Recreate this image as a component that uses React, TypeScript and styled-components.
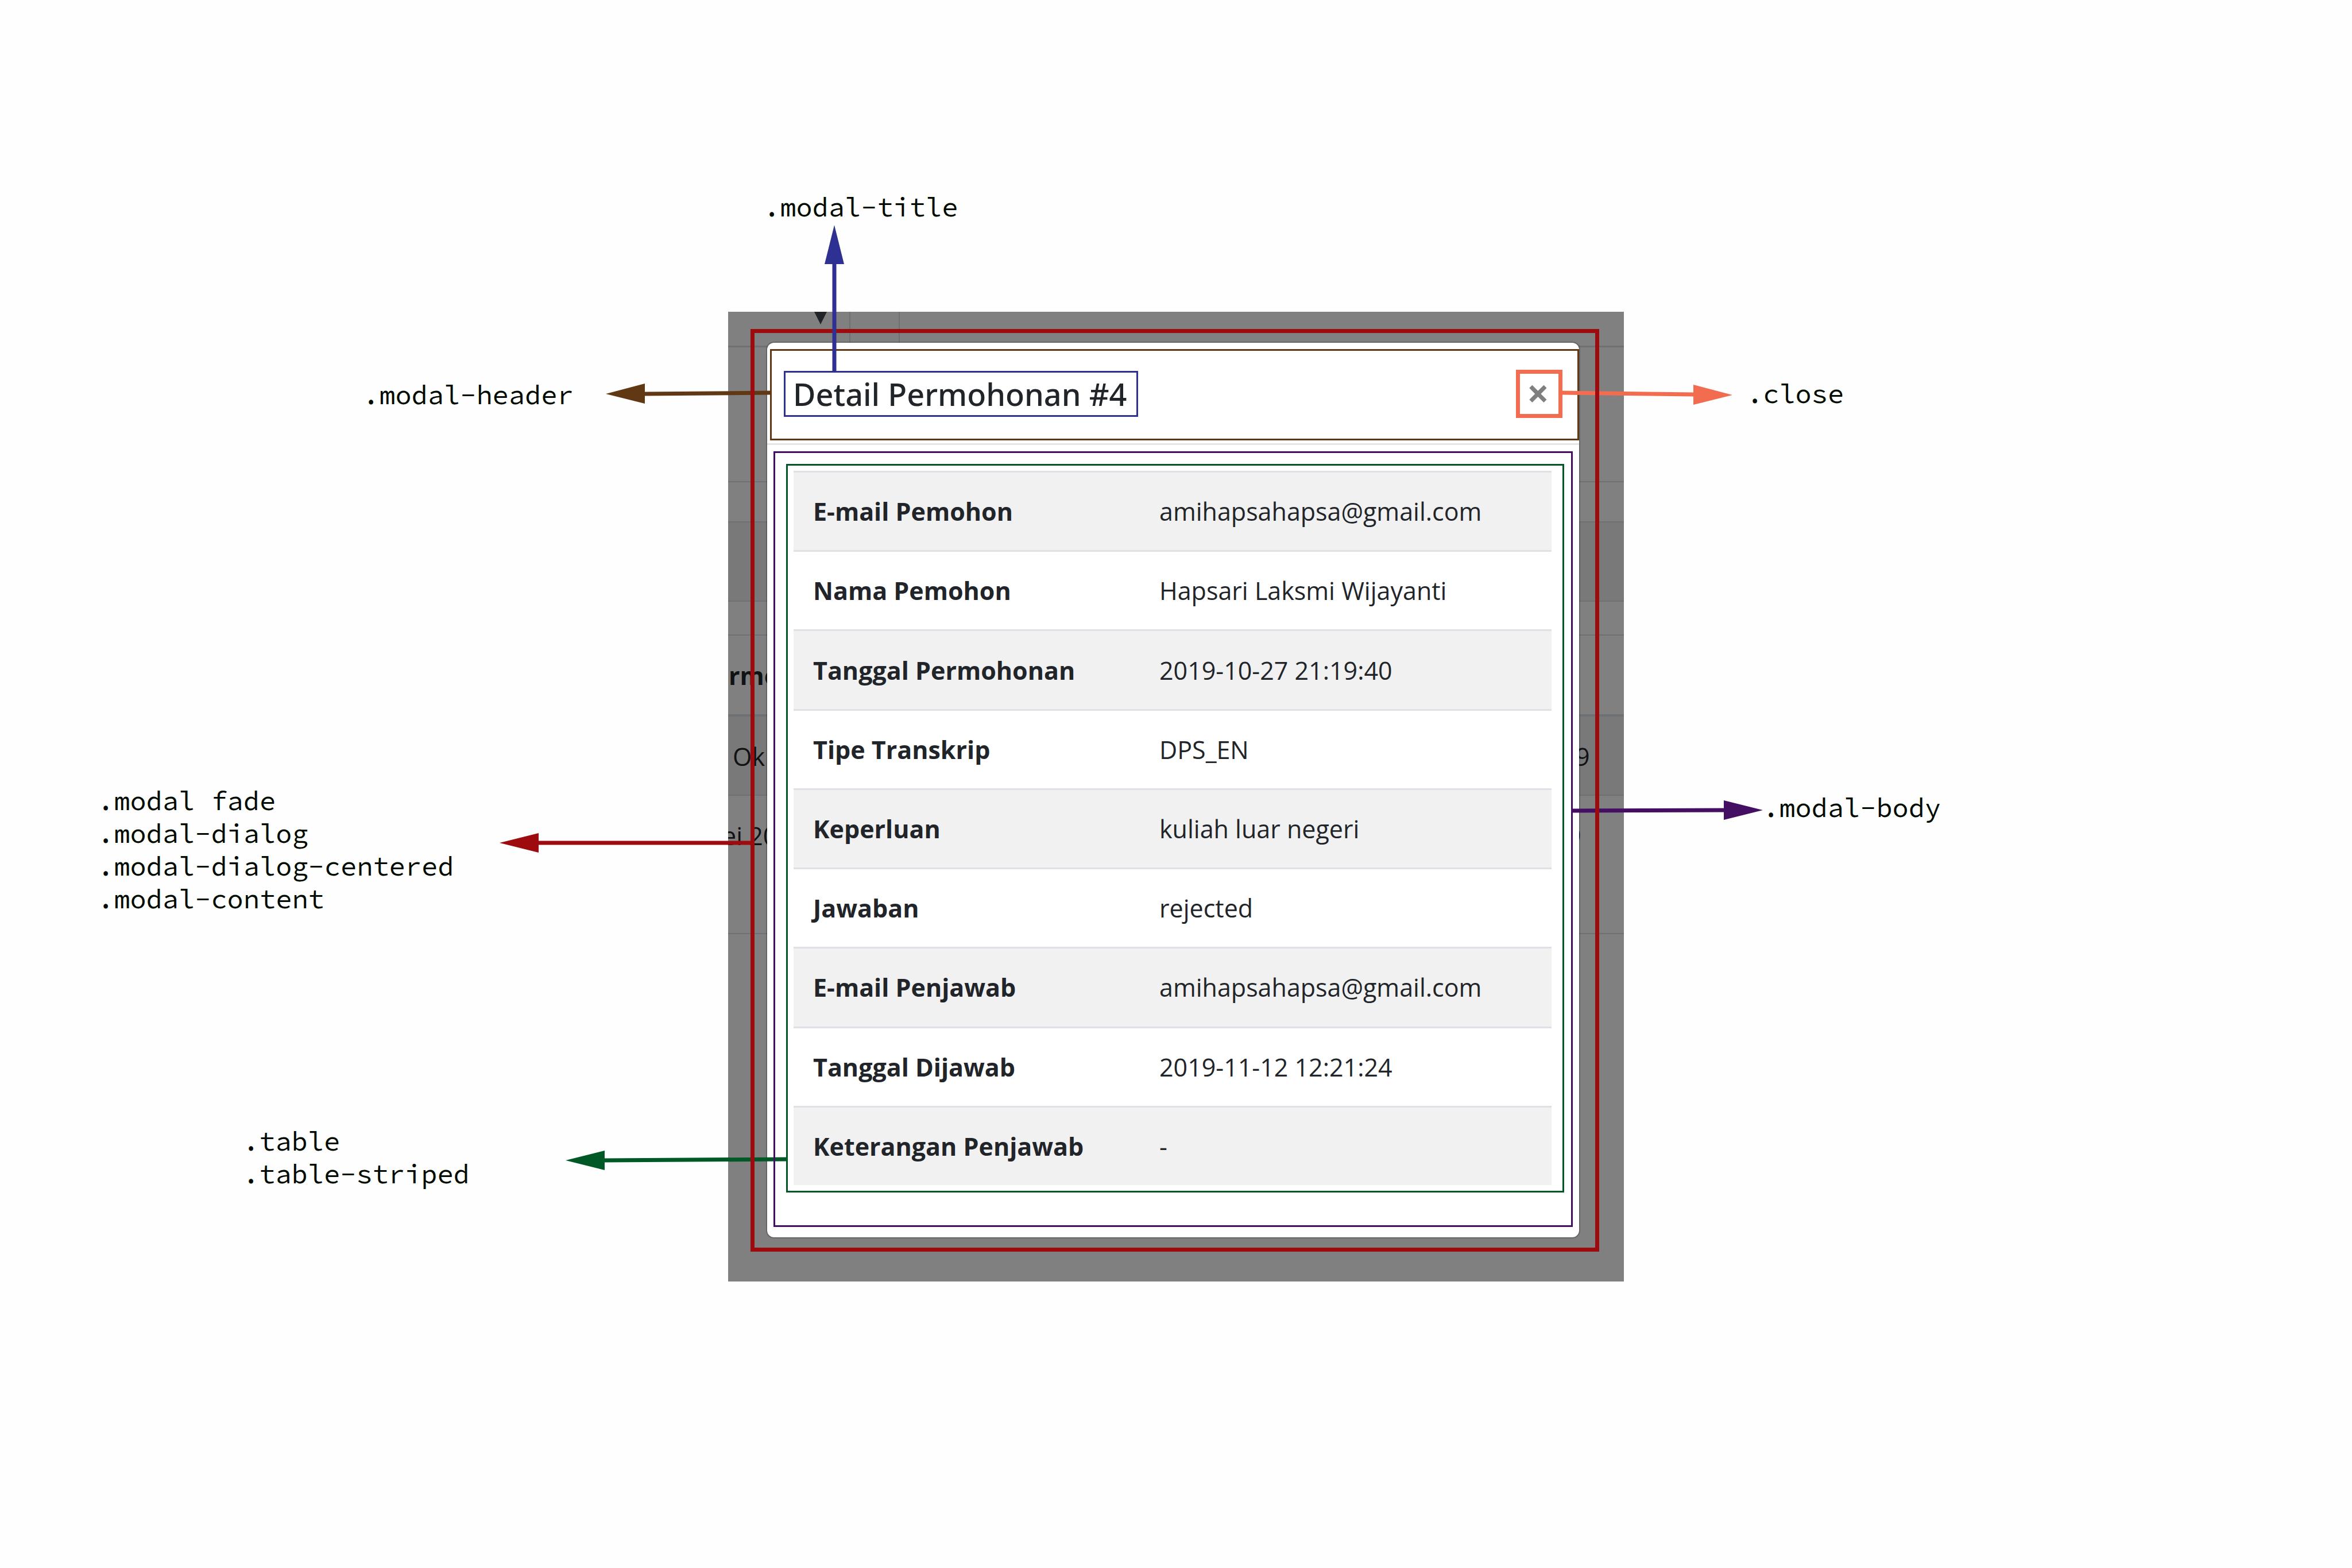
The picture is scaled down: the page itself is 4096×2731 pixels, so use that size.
import React from 'react';
import styled, { createGlobalStyle, css } from 'styled-components';

const colors = {
  dialog: '#9e0b0f',
  header: '#603813',
  title: '#2e3192',
  close: '#f26c4f',
  body: '#440e62',
  table: '#005826',
  ink: '#212529',
  line: '#dee2e6',
};

const GlobalStyle = createGlobalStyle`
  *, *::before, *::after { box-sizing: border-box; }
  body {
    margin: 0;
    background: #fefefe;
    color: ${colors.ink};
    font-family: 'Open Sans', 'Noto Sans', sans-serif;
    overflow-x: hidden;
  }
`;

/* Coloured outline drawn above the content and the leader lines. */
const outlined = (color: string, width: number, level: number) => css`
  position: relative;
  &::after {
    content: '';
    position: absolute;
    inset: 0;
    border: ${width}px solid ${color};
    z-index: ${level};
    pointer-events: none;
  }
`;

const Page = styled.main`
  display: flex;
  justify-content: center;
  padding: 543px 0 499px;
`;

const Shot = styled.figure`
  position: relative;
  display: grid;
  width: 1560px;
  margin: 0;
`;

const Backdrop = styled.div`
  grid-area: 1 / 1;
  display: flex;
  flex-direction: column;
  background: #808080;
  color: #101214;
  font-size: 43px;
  line-height: 67px;
  overflow: hidden;
`;

const BackRow = styled.div<{ $h: number; $band?: boolean; $rule?: number }>`
  display: flex;
  justify-content: space-between;
  align-items: flex-start;
  flex: none;
  height: ${(p) => p.$h}px;
  background: ${(p) => (p.$band ? '#797979' : 'transparent')};
  border-bottom: ${(p) => p.$rule ?? 2}px solid #6e7174;
`;

const BackTextRow = styled(BackRow)`
  padding-top: 36px;
`;

const BackFilters = styled(BackRow)`
  justify-content: flex-start;
  align-items: stretch;
`;

const FilterCell = styled.div<{ $w: number }>`
  width: ${(p) => p.$w}px;
  border-right: 2px solid #6e7174;
`;

const SortMark = styled.svg`
  display: block;
  width: 22px;
  height: 22px;
  margin-left: 150px;
`;

const BackText = styled.span<{ $bold?: boolean; $indent?: number; $w: number }>`
  width: ${(p) => p.$w}px;
  white-space: pre;
  text-indent: ${(p) => p.$indent ?? 0}px;
  font-weight: ${(p) => (p.$bold ? 700 : 400)};
`;

const Dialog = styled.div`
  grid-area: 1 / 1;
  margin: 30px 43px 52px 39px;
  padding: 22px 33px 23px 27px;
  ${outlined(colors.dialog, 7, 2)}
`;

const Content = styled.section`
  background: #fff;
  background-clip: padding-box;
  border: 2px solid rgba(0, 0, 0, 0.2);
  border-radius: 14px;
`;

const Header = styled.header`
  display: flex;
  align-items: center;
  justify-content: space-between;
  margin: 11px 0 5px 5px;
  padding: 36px 29px 39px 24px;
  ${outlined(colors.header, 3, 1)}
`;

const Title = styled.h5`
  margin: 0;
  padding: 0 20px 0 16px;
  font-family: 'Noto Sans', 'Open Sans', sans-serif;
  font-size: 54px;
  line-height: 80px;
  font-weight: 500;
  ${outlined(colors.title, 3, 1)}
`;

const Close = styled.button`
  display: flex;
  align-items: center;
  justify-content: center;
  width: 81px;
  height: 84px;
  padding: 0 4px 4px 0;
  border: 7px solid ${colors.close};
  background: transparent;
  color: #7f7f7f;
  font: 700 68px/68px 'Open Sans', sans-serif;
`;

const Divider = styled.hr`
  height: 3px;
  margin: 0;
  border: 0;
  background: #e3e7ea;
`;

const Body = styled.div`
  margin: 11px 11px 18px;
  padding: 22px 15px 60px 22px;
  ${outlined(colors.body, 3, 2)}
`;

const TableFrame = styled.div`
  padding: 12px 22px 13px 13px;
  ${outlined(colors.table, 3, 1)}
`;

const Table = styled.table`
  width: 100%;
  height: 1244px;
  border-spacing: 0;
  font-size: 43px;
  line-height: 67px;
  text-align: left;
`;

const Row = styled.tr`
  &:nth-child(odd) { background: #f1f1f1; }
`;

const cell = css`
  padding: 34px;
  border-top: 3px solid ${colors.line};
  white-space: nowrap;
`;

const Term = styled.th`
  ${cell}
  width: 603px;
  font-weight: 700;
`;

const Value = styled.td`
  ${cell}
`;

const Leaders = styled.svg<{ $level: number }>`
  position: absolute;
  inset: 0;
  width: 100%;
  height: 100%;
  overflow: visible;
  pointer-events: none;
  z-index: ${(p) => p.$level};
`;

const Note = styled.figcaption<{ $x: number; $y: number }>`
  position: absolute;
  left: ${(p) => p.$x}px;
  top: ${(p) => p.$y}px;
  color: #000a00;
  font-family: 'Source Code Pro', 'DejaVu Sans Mono', monospace;
  font-size: 47px;
  line-height: 57px;
  white-space: pre;
`;

type ArrowProps = { color: string; from: [number, number]; neck: [number, number]; head: string };

const Arrow = ({ color, from, neck, head }: ArrowProps) => (
  <g fill={color} stroke="none">
    <line x1={from[0]} y1={from[1]} x2={neck[0]} y2={neck[1]} stroke={color} strokeWidth={7} />
    <polygon points={head} />
  </g>
);

const details: [string, string][] = [
  ['E-mail Pemohon', 'amihapsahapsa@gmail.com'],
  ['Nama Pemohon', 'Hapsari Laksmi Wijayanti'],
  ['Tanggal Permohonan', '2019-10-27 21:19:40'],
  ['Tipe Transkrip', 'DPS_EN'],
  ['Keperluan', 'kuliah luar negeri'],
  ['Jawaban', 'rejected'],
  ['E-mail Penjawab', 'amihapsahapsa@gmail.com'],
  ['Tanggal Dijawab', '2019-11-12 12:21:24'],
  ['Keterangan Penjawab', '-'],
];

const notes: { x: number; y: number; lines: string[] }[] = [
  { x: 62, y: -211, lines: ['.modal-title'] },
  { x: -636, y: 116, lines: ['.modal-header'] },
  { x: 1774, y: 114, lines: ['.close'] },
  { x: -1098, y: 823, lines: ['.modal fade', '.modal-dialog', '.modal-dialog-centered', '.modal-content'] },
  { x: 1802, y: 835, lines: ['.modal-body'] },
  { x: -845, y: 1416, lines: ['.table', '.table-striped'] },
];

export default function App() {
  return (
    <>
      <GlobalStyle />
      <Page>
        <Shot>
          <Backdrop>
            <BackFilters $h={62} $rule={3}>
              <FilterCell $w={213}>
                <SortMark viewBox="0 0 22 22">
                  <polygon points="0,0 22,0 11,22" fill="#212529" />
                </SortMark>
              </FilterCell>
              <FilterCell $w={86} />
            </BackFilters>
            <BackRow $h={235} />
            <BackRow $h={70} />
            <BackRow $h={138} $band />
            <BackRow $h={59} />
            <BackTextRow $h={141} $rule={4}>
              <BackText $w={70} $indent={1} $bold>rmo</BackText>
            </BackTextRow>
            <BackTextRow $h={138} $band>
              <BackText $w={70} $indent={8}>Ok</BackText>
              <BackText $w={84}>9</BackText>
            </BackTextRow>
            <BackTextRow $h={241}>
              <BackText $w={70} $indent={-10}>ei 20</BackText>
              <BackText $w={99}>9</BackText>
            </BackTextRow>
          </Backdrop>

          <Dialog>
            <Content role="dialog" aria-labelledby="detail-title">
              <Header>
                <Title id="detail-title">Detail Permohonan #4</Title>
                <Close type="button" aria-label="Close">×</Close>
              </Header>
              <Divider />
              <Body>
                <TableFrame>
                  <Table>
                    <tbody>
                      {details.map(([term, value]) => (
                        <Row key={term}>
                          <Term scope="row">{term}</Term>
                          <Value>{value}</Value>
                        </Row>
                      ))}
                    </tbody>
                  </Table>
                </TableFrame>
              </Body>
            </Content>
          </Dialog>

          <Leaders $level={1} viewBox="1268 543 1560 1689">
            <Arrow color={colors.header} from={[1342, 684]} neck={[1122, 686]} head="1055,686 1123,668 1123,703" />
            <Arrow color={colors.close} from={[2720, 684]} neck={[2950, 687]} head="3017,688 2949,670 2949,705" />
            <Arrow color={colors.dialog} from={[1308, 1468]} neck={[937, 1468]} head="870,1468 938,1451 938,1485" />
            <Arrow color={colors.body} from={[2738, 1412]} neck={[3003, 1411]} head="3070,1411 3002,1394 3002,1428" />
            <Arrow color={colors.table} from={[1371, 2019]} neck={[1052, 2021]} head="985,2021 1053,2004 1053,2038" />
          </Leaders>
          <Leaders $level={3} viewBox="1268 543 1560 1689">
            <Arrow color={colors.title} from={[1453, 648]} neck={[1453, 459]} head="1453,392 1436,460 1470,460" />
          </Leaders>

          {notes.map((note) => (
            <Note key={note.lines[0]} $x={note.x} $y={note.y}>
              {note.lines.join('\n')}
            </Note>
          ))}
        </Shot>
      </Page>
    </>
  );
}
